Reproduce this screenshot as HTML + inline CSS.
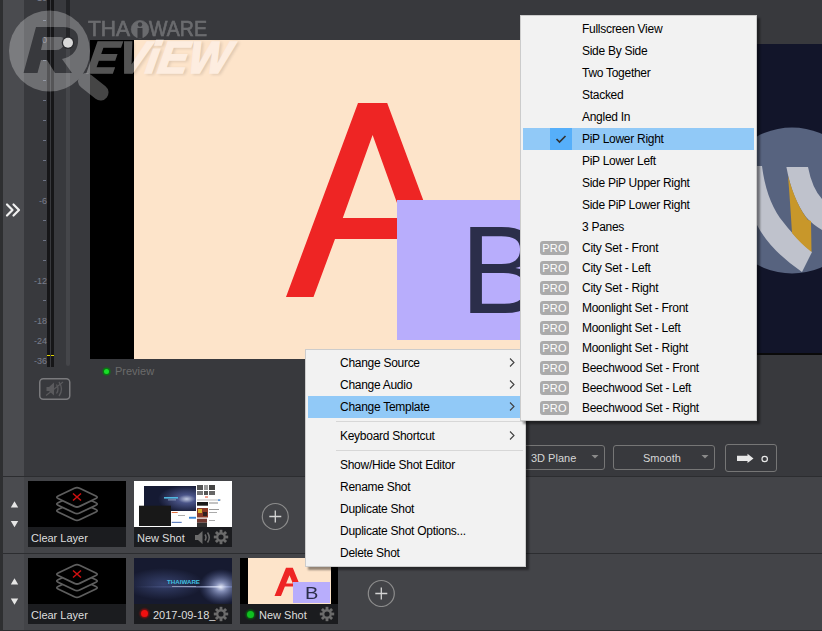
<!DOCTYPE html>
<html><head><meta charset="utf-8">
<style>
*{margin:0;padding:0;box-sizing:border-box}
html,body{width:822px;height:631px;overflow:hidden;background:#38393d;font-family:"Liberation Sans",sans-serif}
.a{position:absolute}
.lbl{position:absolute;font-size:9px;color:#7a7e8c;text-align:right;width:20px;line-height:9px}
.menu{position:absolute;background:#f2f2f2;border:1px solid #cccccc;box-shadow:3px 3px 2px rgba(0,0,0,0.42)}
.mi{position:absolute;left:0;right:0;height:22px;line-height:22px;font-size:12px;color:#000;white-space:nowrap;letter-spacing:-0.28px}
.mi span{position:absolute}
.chev{position:absolute;width:5px;height:5px;border-right:1px solid #333;border-top:1px solid #333;transform:rotate(45deg)}
.sep{position:absolute;height:1px;background:#d7d7d7}
.pro{position:absolute;left:19px;width:29px;height:14px;background:#ababab;border-radius:3px;color:#fff;font-size:11px;line-height:14px;text-align:center;letter-spacing:0.3px}
.thumb{position:absolute;width:98px;height:66px;background:#000}
.cap{position:absolute;left:0;bottom:0;width:98px;height:20px;background:#1b1c1f;color:#dedede;font-size:11px;line-height:22px;white-space:nowrap}
.dd{position:absolute;border:1px solid #767676;border-radius:3px;height:25px;color:#d6d6d6;font-size:11px;line-height:23px}
</style></head><body>

<!-- left strips -->
<div class="a" style="left:0;top:0;width:3px;height:631px;background:#2e2f31"></div>
<div class="a" style="left:3px;top:0;width:21px;height:631px;background:#4a4b4f"></div>

<!-- lower rows background -->
<div class="a" style="left:24px;top:477px;width:798px;height:154px;background:#434448"></div>
<div class="a" style="left:3px;top:476px;width:819px;height:1px;background:#2c2d30"></div>
<div class="a" style="left:3px;top:553px;width:819px;height:1px;background:#2c2d30"></div>
<div class="a" style="left:3px;top:630px;width:819px;height:1px;background:#2c2d30"></div>

<!-- double chevron -->
<svg class="a" style="left:0;top:196px" width="24" height="30" viewBox="0 0 24 30">
<path d="M7 8.5 L12.5 14 L7 19.5 M13.5 8.5 L19 14 L13.5 19.5" fill="none" stroke="#f0f0f0" stroke-width="2.2" stroke-linecap="round" stroke-linejoin="round"/>
</svg>

<!-- meter -->
<div class="a" style="left:47px;top:0;width:3px;height:367px;background:#161618"></div>
<div class="a" style="left:51px;top:0;width:3px;height:367px;background:#161618"></div>
<div class="a" style="left:47px;top:354.5px;width:3px;height:1.5px;background:#e0d400"></div>
<div class="a" style="left:51px;top:354.5px;width:3px;height:1.5px;background:#e0d400"></div>
<div class="a" style="left:66px;top:0;width:4px;height:366px;background:#45464a;border-radius:0 0 2px 2px"></div>
<div class="a" style="left:66px;top:0;width:4px;height:43px;background:#232427"></div>
<div class="lbl" style="left:27px;top:-6px">10</div>
<div class="a" style="left:43px;top:20px;width:3px;height:1px;background:#6d7385"></div>
<div class="lbl" style="left:27px;top:36px">0</div>
<div class="a" style="left:43px;top:60px;width:3px;height:1px;background:#6d7385"></div>
<div class="a" style="left:43px;top:80px;width:3px;height:1px;background:#6d7385"></div>
<div class="a" style="left:43px;top:100px;width:3px;height:1px;background:#6d7385"></div>
<div class="a" style="left:43px;top:120px;width:3px;height:1px;background:#6d7385"></div>
<div class="a" style="left:43px;top:140px;width:3px;height:1px;background:#6d7385"></div>
<div class="a" style="left:43px;top:160px;width:3px;height:1px;background:#6d7385"></div>
<div class="a" style="left:43px;top:180px;width:3px;height:1px;background:#6d7385"></div>
<div class="lbl" style="left:27px;top:197px">-6</div>
<div class="a" style="left:43px;top:220px;width:3px;height:1px;background:#6d7385"></div>
<div class="a" style="left:43px;top:240px;width:3px;height:1px;background:#6d7385"></div>
<div class="a" style="left:43px;top:260px;width:3px;height:1px;background:#6d7385"></div>
<div class="lbl" style="left:27px;top:277px">-12</div>
<div class="a" style="left:43px;top:300px;width:3px;height:1px;background:#6d7385"></div>
<div class="lbl" style="left:27px;top:317px">-18</div>
<div class="lbl" style="left:27px;top:337px">-24</div>
<div class="lbl" style="left:27px;top:357px">-36</div>

<!-- mute button -->
<svg class="a" style="left:39px;top:378px" width="32" height="22" viewBox="0 0 32 22"><rect x="0.75" y="0.75" width="30" height="20.5" rx="3.5" fill="none" stroke="#7a7a7d" stroke-width="1.5"/></svg>
<svg class="a" style="left:39px;top:378px" width="31" height="22" viewBox="0 0 31 22"><path d="M7.5 9 L10 9 L15 4.5 L15 17.5 L10 13 L7.5 13 Z" fill="#5a5a5d"/><path d="M17.5 6.5 Q20.5 11 17.5 15.5 M20 4 Q25 11 20 18" fill="none" stroke="#5a5a5d" stroke-width="1.3"/><path d="M7 17.5 L24 4" stroke="#5a5a5d" stroke-width="1.1"/></svg>

<!-- preview -->
<div class="a" style="left:90px;top:40px;width:667px;height:319px;background:#000"></div>
<div class="a" style="left:134px;top:40px;width:567px;height:319px;background:#fde4ca;overflow:hidden"></div>
<svg class="a" style="left:0;top:0" width="822" height="631" viewBox="0 0 822 631">
<path fill="#ee2524" fill-rule="evenodd" d="M286 297 L358 103 L387.2 103 L459.2 297 L431.7 297 L410.2 239 L335 239 L313.5 297 Z M342.8 218 L372.6 135 L402.4 218 Z"/>
<rect x="397" y="200" width="285" height="140" fill="#b8adfc"/>
</svg>
<div class="a" style="left:460px;top:195px;font-size:125px;line-height:150px;color:#2b2e4a">B</div>

<!-- preview label -->
<div class="a" style="left:104px;top:369px;width:5px;height:5px;border-radius:50%;background:#18e028;box-shadow:0 0 1px 1.5px #0a7a12"></div>
<div class="a" style="left:115px;top:364px;font-size:11px;line-height:14px;color:#6b6b6b">Preview</div>

<!-- right preview -->
<div class="a" style="left:757px;top:44px;width:65px;height:311px;background:#12152a;overflow:hidden">
<svg class="a" style="left:0;top:0" width="65" height="311" viewBox="757 44 65 311">
<circle cx="792" cy="200.5" r="73" fill="#57637f"/>
<path d="M757 166 L762 166 Q766 198 780 218 Q795 238 812 252 L802 272 Q770 250 757 225 Z" fill="#bfc2cc"/>
<path d="M786.4 167 L808 167 Q812 188 822 199 L822 230 Q812 224 806 217 Q792 198 786.4 167 Z" fill="#bfc2cc"/>
<path d="M788 176 Q796 205 808 220 L811 221 L811.5 252 Q800 243 792 233 Q790 200 788 176 Z" fill="#c8972a"/>
<rect x="757" y="353" width="65" height="2" fill="#0a0a0a"/>
</svg>
</div>

<!-- controls -->
<div class="dd" style="left:505px;top:445px;width:100px"><span class="a" style="left:25px;top:1px">3D Plane</span></div>
<div class="dd" style="left:613px;top:445px;width:102px"><span class="a" style="left:29px;top:1px">Smooth</span></div>
<div class="a" style="left:725px;top:444px;width:52px;height:28px;border:1px solid #767676;border-radius:3px"></div>
<svg class="a" style="left:590px;top:454px" width="10" height="6" viewBox="0 0 10 6"><path d="M1.5 1 L8.5 1 L5 4.5 Z" fill="#8a8a8a"/></svg>
<svg class="a" style="left:700px;top:454px" width="10" height="6" viewBox="0 0 10 6"><path d="M1.5 1 L8.5 1 L5 4.5 Z" fill="#8a8a8a"/></svg>
<svg class="a" style="left:725px;top:444px" width="52" height="28" viewBox="0 0 52 28"><path d="M12 11.8 L22.5 11.8 L22.5 9.8 L28.5 14.4 L22.5 19 L22.5 17 L12 17 Z" fill="#e8e8e8"/><circle cx="39.7" cy="15" r="2.7" fill="none" stroke="#e8e8e8" stroke-width="1.2"/></svg>

<svg class="a" style="left:8px;top:498px" width="14" height="32" viewBox="0 0 14 32"><path d="M2.8 9.5 L6.5 3.3 L10.2 9.5 Z M2.8 23 L10.2 23 L6.5 29.3 Z" fill="#e6e6e6"/></svg>
<svg class="a" style="left:8px;top:574.5px" width="14" height="32" viewBox="0 0 14 32"><path d="M2.8 9.5 L6.5 3.3 L10.2 9.5 Z M2.8 23.5 L10.2 23.5 L6.5 29.8 Z" fill="#e6e6e6"/></svg>
<!-- shots row 1 -->
<div class="thumb" style="left:28px;top:481px"><svg class="a" style="left:0;top:0" width="98" height="46" viewBox="0 0 98 46">
<g fill="#000" stroke="#5e5e5e" stroke-width="1.8">
<path transform="translate(0,13.4)" d="M30.08 15.06 L46.42 7.24 Q49 6 51.58 7.24 L67.92 15.06 Q70.5 16.3 67.92 17.54 L51.58 25.36 Q49 26.6 46.42 25.36 L30.08 17.54 Q27.5 16.3 30.08 15.06 Z"/>
<path transform="translate(0,6.7)" d="M30.08 15.06 L46.42 7.24 Q49 6 51.58 7.24 L67.92 15.06 Q70.5 16.3 67.92 17.54 L51.58 25.36 Q49 26.6 46.42 25.36 L30.08 17.54 Q27.5 16.3 30.08 15.06 Z"/>
<path d="M30.08 15.06 L46.42 7.24 Q49 6 51.58 7.24 L67.92 15.06 Q70.5 16.3 67.92 17.54 L51.58 25.36 Q49 26.6 46.42 25.36 L30.08 17.54 Q27.5 16.3 30.08 15.06 Z"/>
</g>
<path d="M45 12.5 L53 19.5 M53 12.5 L45 19.5" stroke="#d01010" stroke-width="1.5"/>
</svg><div class="cap"><span style="padding-left:3px">Clear Layer</span></div></div>
<div class="thumb" style="left:134px;top:481px;background:#fff;overflow:hidden">
<svg class="a" style="left:0;top:0" width="98" height="46" viewBox="0 0 98 46">
<defs><radialGradient id="ns1" cx="0.82" cy="0.52" r="0.55"><stop offset="0" stop-color="#c0c8e0"/><stop offset="0.3" stop-color="#4a5488"/><stop offset="1" stop-color="#151a33"/></radialGradient></defs>
<rect x="10" y="5" width="52" height="25" fill="url(#ns1)"/>
<rect x="30" y="16" width="14" height="1.6" fill="#50b8e0"/>
<rect x="34" y="18.5" width="8" height="0.8" fill="#a0b0d0"/>
<rect x="5" y="24.7" width="32" height="20.3" fill="#181818"/>
<rect x="63" y="4" width="6" height="5" fill="#555"/><rect x="70" y="4" width="4" height="5" fill="#999"/><rect x="75" y="4" width="6" height="5" fill="#444"/>
<rect x="63" y="10" width="6" height="4" fill="#777"/><rect x="70" y="10" width="4" height="4" fill="#555"/><rect x="75" y="10" width="6" height="4" fill="#666"/>
<rect x="71" y="15.5" width="3" height="1" fill="#e04020"/>
<rect x="63" y="18.5" width="24" height="1" fill="#bbb"/><rect x="84" y="18.5" width="2" height="1.2" fill="#3080e0"/>
<rect x="63" y="21" width="11" height="3.7" fill="#1a1a1a"/><rect x="75" y="21.5" width="9" height="1" fill="#888"/>
<rect x="63" y="27" width="11" height="9.5" fill="#8a3a28"/><rect x="64" y="28" width="4" height="4" fill="#d8b030"/><rect x="69" y="31" width="4" height="4" fill="#302020"/>
<rect x="75" y="28" width="10" height="1" fill="#999"/><rect x="75" y="31" width="8" height="1" fill="#aaa"/>
<rect x="63" y="37.7" width="10" height="4" fill="#703830"/><rect x="63" y="41.7" width="10" height="4.3" fill="#303030"/>
<rect x="75" y="39" width="6" height="1" fill="#aaa"/>
<rect x="37.7" y="31" width="6" height="1" fill="#e07040"/>
<rect x="44" y="34" width="7" height="0.8" fill="#999"/>
<rect x="55" y="35.8" width="7" height="1.9" fill="#3a86d8"/>
<rect x="37.7" y="40.8" width="10" height="1.2" fill="#6080c0"/>
</svg>
<div class="cap"><span style="padding-left:3px">New Shot</span></div></div>
<svg class="a" style="left:194px;top:530px" width="17" height="15" viewBox="0 0 17 15"><path d="M1 5 L4 5 L8.5 1 L8.5 14 L4 10 L1 10 Z" fill="#6b6b6b"/><path d="M11 4.5 Q13 7.5 11 10.5 M13.5 2.5 Q17 7.5 13.5 12.5" fill="none" stroke="#6b6b6b" stroke-width="1.5"/></svg>
<svg class="a" style="left:213px;top:529px" width="16" height="16" viewBox="-8 -8 16 16"><g fill="#6b6b6b"><rect x="-1.4" y="-7.2" width="2.8" height="4" transform="rotate(0)"/><rect x="-1.4" y="-7.2" width="2.8" height="4" transform="rotate(45)"/><rect x="-1.4" y="-7.2" width="2.8" height="4" transform="rotate(90)"/><rect x="-1.4" y="-7.2" width="2.8" height="4" transform="rotate(135)"/><rect x="-1.4" y="-7.2" width="2.8" height="4" transform="rotate(180)"/><rect x="-1.4" y="-7.2" width="2.8" height="4" transform="rotate(225)"/><rect x="-1.4" y="-7.2" width="2.8" height="4" transform="rotate(270)"/><rect x="-1.4" y="-7.2" width="2.8" height="4" transform="rotate(315)"/></g><circle r="4.8" fill="#6b6b6b"/><circle r="2.6" fill="#1b1c1f"/></svg>
<svg class="a" style="left:261px;top:502px" width="28" height="28" viewBox="0 0 28 28"><circle cx="14.3" cy="14.5" r="13" fill="none" stroke="#8c8c8c" stroke-width="1.2"/><path d="M14.3 8.5 V20.5 M8.3 14.5 H20.3" stroke="#d4d4d4" stroke-width="1.3"/></svg>
<!-- shots row 2 -->
<div class="thumb" style="left:28px;top:558px"><svg class="a" style="left:0;top:0" width="98" height="46" viewBox="0 0 98 46">
<g fill="#000" stroke="#5e5e5e" stroke-width="1.8">
<path transform="translate(0,13.4)" d="M30.08 15.06 L46.42 7.24 Q49 6 51.58 7.24 L67.92 15.06 Q70.5 16.3 67.92 17.54 L51.58 25.36 Q49 26.6 46.42 25.36 L30.08 17.54 Q27.5 16.3 30.08 15.06 Z"/>
<path transform="translate(0,6.7)" d="M30.08 15.06 L46.42 7.24 Q49 6 51.58 7.24 L67.92 15.06 Q70.5 16.3 67.92 17.54 L51.58 25.36 Q49 26.6 46.42 25.36 L30.08 17.54 Q27.5 16.3 30.08 15.06 Z"/>
<path d="M30.08 15.06 L46.42 7.24 Q49 6 51.58 7.24 L67.92 15.06 Q70.5 16.3 67.92 17.54 L51.58 25.36 Q49 26.6 46.42 25.36 L30.08 17.54 Q27.5 16.3 30.08 15.06 Z"/>
</g>
<path d="M45 12.5 L53 19.5 M53 12.5 L45 19.5" stroke="#d01010" stroke-width="1.5"/>
</svg><div class="cap"><span style="padding-left:3px">Clear Layer</span></div></div>
<div class="thumb" style="left:134px;top:558px;background:#161a30;overflow:hidden">
<svg class="a" style="left:0;top:0" width="98" height="46" viewBox="0 0 98 46">
<defs>
<radialGradient id="g1" cx="0.5" cy="0.5" r="0.5"><stop offset="0" stop-color="#3a4674" stop-opacity="0.9"/><stop offset="1" stop-color="#3a4674" stop-opacity="0"/></radialGradient>
<radialGradient id="g2" cx="0.5" cy="0.5" r="0.5"><stop offset="0" stop-color="#e8ecf8"/><stop offset="0.25" stop-color="#a0acd8" stop-opacity="0.8"/><stop offset="1" stop-color="#5060a0" stop-opacity="0"/></radialGradient>
<linearGradient id="g3" x1="0" x2="1"><stop offset="0" stop-color="#8090d0" stop-opacity="0"/><stop offset="0.5" stop-color="#8090d0" stop-opacity="0.35"/><stop offset="0.88" stop-color="#e0e6f8" stop-opacity="0.9"/><stop offset="1" stop-color="#8090d0" stop-opacity="0.4"/></linearGradient>
</defs>
<ellipse cx="30" cy="26" rx="40" ry="16" fill="url(#g1)"/>
<ellipse cx="87" cy="29" rx="22" ry="18" fill="url(#g2)"/>
<rect x="0" y="28" width="98" height="1.6" fill="url(#g3)"/>
<text x="33" y="25.5" font-family="Liberation Sans" font-weight="bold" font-size="5.2" fill="#40c0e0" textLength="33" lengthAdjust="spacingAndGlyphs">THAIWARE</text>
<rect x="38" y="28" width="24" height="1" fill="#c0c8e0" opacity="0.6"/>
</svg>
<div class="cap"><span style="padding-left:19px">2017-09-18_</span></div></div>
<div class="a" style="left:140.5px;top:610px;width:7px;height:7px;border-radius:50%;background:#f01010;box-shadow:0 0 1.5px 1.5px #7a1010"></div>
<svg class="a" style="left:213px;top:606px" width="16" height="16" viewBox="-8 -8 16 16"><g fill="#6b6b6b"><rect x="-1.4" y="-7.2" width="2.8" height="4" transform="rotate(0)"/><rect x="-1.4" y="-7.2" width="2.8" height="4" transform="rotate(45)"/><rect x="-1.4" y="-7.2" width="2.8" height="4" transform="rotate(90)"/><rect x="-1.4" y="-7.2" width="2.8" height="4" transform="rotate(135)"/><rect x="-1.4" y="-7.2" width="2.8" height="4" transform="rotate(180)"/><rect x="-1.4" y="-7.2" width="2.8" height="4" transform="rotate(225)"/><rect x="-1.4" y="-7.2" width="2.8" height="4" transform="rotate(270)"/><rect x="-1.4" y="-7.2" width="2.8" height="4" transform="rotate(315)"/></g><circle r="4.8" fill="#6b6b6b"/><circle r="2.6" fill="#1b1c1f"/></svg>
<div class="thumb" style="left:240px;top:558px;overflow:hidden">
<div class="a" style="left:8px;top:0;width:83px;height:46px;background:#fde4ca"></div>
<svg class="a" style="left:0;top:0" width="98" height="46" viewBox="0 0 98 46"><path fill="#ee2524" fill-rule="evenodd" d="M34.5 38 L46 9.8 L52.8 9.8 L64.3 38 L58 38 L54.1 28.4 L44.9 28.4 L41 38 Z M46.1 25.5 L49.5 17.3 L52.9 25.5 Z"/><rect x="53" y="24" width="37" height="21" fill="#b8adfc"/></svg>
<div class="a" style="left:65px;top:26px;font-size:17px;line-height:20px;color:#2b2e4a;transform:scaleX(1.18);transform-origin:0 0">B</div>
<div class="cap"><span style="padding-left:19px">New Shot</span></div></div>
<div class="a" style="left:246.5px;top:610.5px;width:7px;height:7px;border-radius:50%;background:#10c020;box-shadow:0 0 1.5px 1.5px #0a5a10"></div>
<svg class="a" style="left:319px;top:606px" width="16" height="16" viewBox="-8 -8 16 16"><g fill="#6b6b6b"><rect x="-1.4" y="-7.2" width="2.8" height="4" transform="rotate(0)"/><rect x="-1.4" y="-7.2" width="2.8" height="4" transform="rotate(45)"/><rect x="-1.4" y="-7.2" width="2.8" height="4" transform="rotate(90)"/><rect x="-1.4" y="-7.2" width="2.8" height="4" transform="rotate(135)"/><rect x="-1.4" y="-7.2" width="2.8" height="4" transform="rotate(180)"/><rect x="-1.4" y="-7.2" width="2.8" height="4" transform="rotate(225)"/><rect x="-1.4" y="-7.2" width="2.8" height="4" transform="rotate(270)"/><rect x="-1.4" y="-7.2" width="2.8" height="4" transform="rotate(315)"/></g><circle r="4.8" fill="#6b6b6b"/><circle r="2.6" fill="#1b1c1f"/></svg>
<svg class="a" style="left:367px;top:579px" width="28" height="28" viewBox="0 0 28 28"><circle cx="14.3" cy="14.5" r="13" fill="none" stroke="#8c8c8c" stroke-width="1.2"/><path d="M14.3 8.5 V20.5 M8.3 14.5 H20.3" stroke="#d4d4d4" stroke-width="1.3"/></svg>

<!-- main context menu -->
<div class="menu" style="left:305px;top:349px;width:221px;height:218px">
<div class="mi" style="top:2px"><span style="left:34px">Change Source</span></div>
<svg class="a" style="left:203px;top:8px" width="6" height="9" viewBox="0 0 6 9"><path d="M1 0.5 L5 4.5 L1 8.5" fill="none" stroke="#404040" stroke-width="1.1"/></svg>
<div class="mi" style="top:24px"><span style="left:34px">Change Audio</span></div>
<svg class="a" style="left:203px;top:30px" width="6" height="9" viewBox="0 0 6 9"><path d="M1 0.5 L5 4.5 L1 8.5" fill="none" stroke="#404040" stroke-width="1.1"/></svg>
<div class="a" style="left:2px;top:46px;width:215px;height:22px;background:#91c9f7"></div>
<div class="mi" style="top:46px"><span style="left:34px">Change Template</span></div>
<svg class="a" style="left:203px;top:52px" width="6" height="9" viewBox="0 0 6 9"><path d="M1 0.5 L5 4.5 L1 8.5" fill="none" stroke="#404040" stroke-width="1.1"/></svg>
<div class="mi" style="top:75px"><span style="left:34px">Keyboard Shortcut</span></div>
<svg class="a" style="left:203px;top:81px" width="6" height="9" viewBox="0 0 6 9"><path d="M1 0.5 L5 4.5 L1 8.5" fill="none" stroke="#404040" stroke-width="1.1"/></svg>
<div class="mi" style="top:104px"><span style="left:34px">Show/Hide Shot Editor</span></div>
<div class="mi" style="top:126px"><span style="left:34px">Rename Shot</span></div>
<div class="mi" style="top:148px"><span style="left:34px">Duplicate Shot</span></div>
<div class="mi" style="top:170px"><span style="left:34px">Duplicate Shot Options...</span></div>
<div class="mi" style="top:192px"><span style="left:34px">Delete Shot</span></div>
<div class="sep" style="left:30px;top:71px;width:187px"></div>
<div class="sep" style="left:30px;top:100px;width:187px"></div>
</div>

<!-- template submenu -->
<div class="menu" style="left:520px;top:15px;width:237px;height:406px">
<div class="mi" style="top:2px"><span style="left:61px">Fullscreen View</span></div>
<div class="mi" style="top:24px"><span style="left:61px">Side By Side</span></div>
<div class="mi" style="top:46px"><span style="left:61px">Two Together</span></div>
<div class="mi" style="top:68px"><span style="left:61px">Stacked</span></div>
<div class="mi" style="top:90px"><span style="left:61px">Angled In</span></div>
<div class="a" style="left:2px;top:112px;width:231px;height:22px;background:#91c9f7"></div>
<div class="a" style="left:29px;top:112px;width:22px;height:22px;background:#56affa"></div>
<svg class="a" style="left:29px;top:112px" width="22" height="22" viewBox="0 0 22 22"><path d="M6.5 11 L9.5 14 L15.5 8" fill="none" stroke="#333" stroke-width="1.7"/></svg>
<div class="mi" style="top:112px"><span style="left:61px">PiP Lower Right</span></div>
<div class="mi" style="top:134px"><span style="left:61px">PiP Lower Left</span></div>
<div class="mi" style="top:156px"><span style="left:61px">Side PiP Upper Right</span></div>
<div class="mi" style="top:178px"><span style="left:61px">Side PiP Lower Right</span></div>
<div class="mi" style="top:200px"><span style="left:61px">3 Panes</span></div>
<div class="pro" style="top:225px">PRO</div>
<div class="mi" style="top:222px;height:20px;line-height:20px"><span style="left:61px">City Set - Front</span></div>
<div class="pro" style="top:245px">PRO</div>
<div class="mi" style="top:242px;height:20px;line-height:20px"><span style="left:61px">City Set - Left</span></div>
<div class="pro" style="top:265px">PRO</div>
<div class="mi" style="top:262px;height:20px;line-height:20px"><span style="left:61px">City Set - Right</span></div>
<div class="pro" style="top:285px">PRO</div>
<div class="mi" style="top:282px;height:20px;line-height:20px"><span style="left:61px">Moonlight Set - Front</span></div>
<div class="pro" style="top:305px">PRO</div>
<div class="mi" style="top:302px;height:20px;line-height:20px"><span style="left:61px">Moonlight Set - Left</span></div>
<div class="pro" style="top:325px">PRO</div>
<div class="mi" style="top:322px;height:20px;line-height:20px"><span style="left:61px">Moonlight Set - Right</span></div>
<div class="pro" style="top:345px">PRO</div>
<div class="mi" style="top:342px;height:20px;line-height:20px"><span style="left:61px">Beechwood Set - Front</span></div>
<div class="pro" style="top:365px">PRO</div>
<div class="mi" style="top:362px;height:20px;line-height:20px"><span style="left:61px">Beechwood Set - Left</span></div>
<div class="pro" style="top:385px">PRO</div>
<div class="mi" style="top:382px;height:20px;line-height:20px"><span style="left:61px">Beechwood Set - Right</span></div>
</div>

<!-- watermark -->
<svg class="a" style="left:0;top:0" width="260" height="110" viewBox="0 0 260 110">
<defs><mask id="rm"><rect x="0" y="0" width="260" height="110" fill="#fff"/>
<path fill="#000" fill-rule="evenodd" d="M23.5 73 L36 27 L64 27 Q80 28 78 43 Q76 56 62 59 L72 73 L55 73 L47 60 L41 60 L37.5 73 Z M44 37 L61 37 Q66 38 64 44 Q62 50 56 50 L41 50 Z"/>
</mask></defs>
<g opacity="0.27" fill="#fff">
<g mask="url(#rm)">
<circle cx="49.5" cy="51" r="40.5"/>
<path d="M86 81 L100.5 92.5" stroke="#fff" stroke-width="16" stroke-linecap="round"/>
</g>
</g>
<circle cx="68" cy="42.7" r="6.3" fill="#2a2b2e"/>
<circle cx="68" cy="42.7" r="5" fill="#d9d9d9"/>
<g opacity="0.25" fill="#fff" stroke="#fff" stroke-width="0.6" font-family="Liberation Sans" >
<text x="88" y="36.3" font-size="21.5" textLength="42" lengthAdjust="spacingAndGlyphs">THA</text>
<circle cx="140" cy="29.2" r="8.8"/>
<text x="149" y="36.3" font-size="21.5" textLength="58" lengthAdjust="spacingAndGlyphs">WARE</text>
</g>
<circle cx="140" cy="24.5" r="2.2" fill="#38393d"/>
<path d="M137.5 28 L142.5 28 L142.5 38 L137.5 38 Z" fill="#38393d"/>
<clipPath id="cpk"><path d="M0 0 H260 V40 H134 V110 H0 Z"/></clipPath>
<clipPath id="cpp"><rect x="134" y="40" width="126" height="70"/></clipPath>
<filter id="bl" x="-10%" y="-30%" width="120%" height="160%"><feGaussianBlur stdDeviation="1.5"/></filter><g clip-path="url(#cpp)"><g opacity="0.12" fill="#000" stroke="#000" stroke-width="1.6" font-family="Liberation Sans" font-weight="bold" font-style="italic" transform="translate(2,1.5)" filter="url(#bl)"><text x="86.5" y="72.8" font-size="45" transform="translate(0,73.5) skewX(-9) translate(0,-73.5)" textLength="142" lengthAdjust="spacingAndGlyphs">EViEW</text></g></g>
<g clip-path="url(#cpk)"><g opacity="0.33" fill="#fff" stroke="#fff" stroke-width="1.6" font-family="Liberation Sans" font-weight="bold" font-style="italic"><text x="86.5" y="72.8" font-size="45" transform="translate(0,73.5) skewX(-9) translate(0,-73.5)" textLength="142" lengthAdjust="spacingAndGlyphs">EViEW</text></g></g>
<g clip-path="url(#cpp)"><g fill="#fdede0" stroke="#fdede0" stroke-width="1.6" font-family="Liberation Sans" font-weight="bold" font-style="italic"><text x="86.5" y="72.8" font-size="45" transform="translate(0,73.5) skewX(-9) translate(0,-73.5)" textLength="142" lengthAdjust="spacingAndGlyphs">EViEW</text></g></g>
</svg>
</body></html>
